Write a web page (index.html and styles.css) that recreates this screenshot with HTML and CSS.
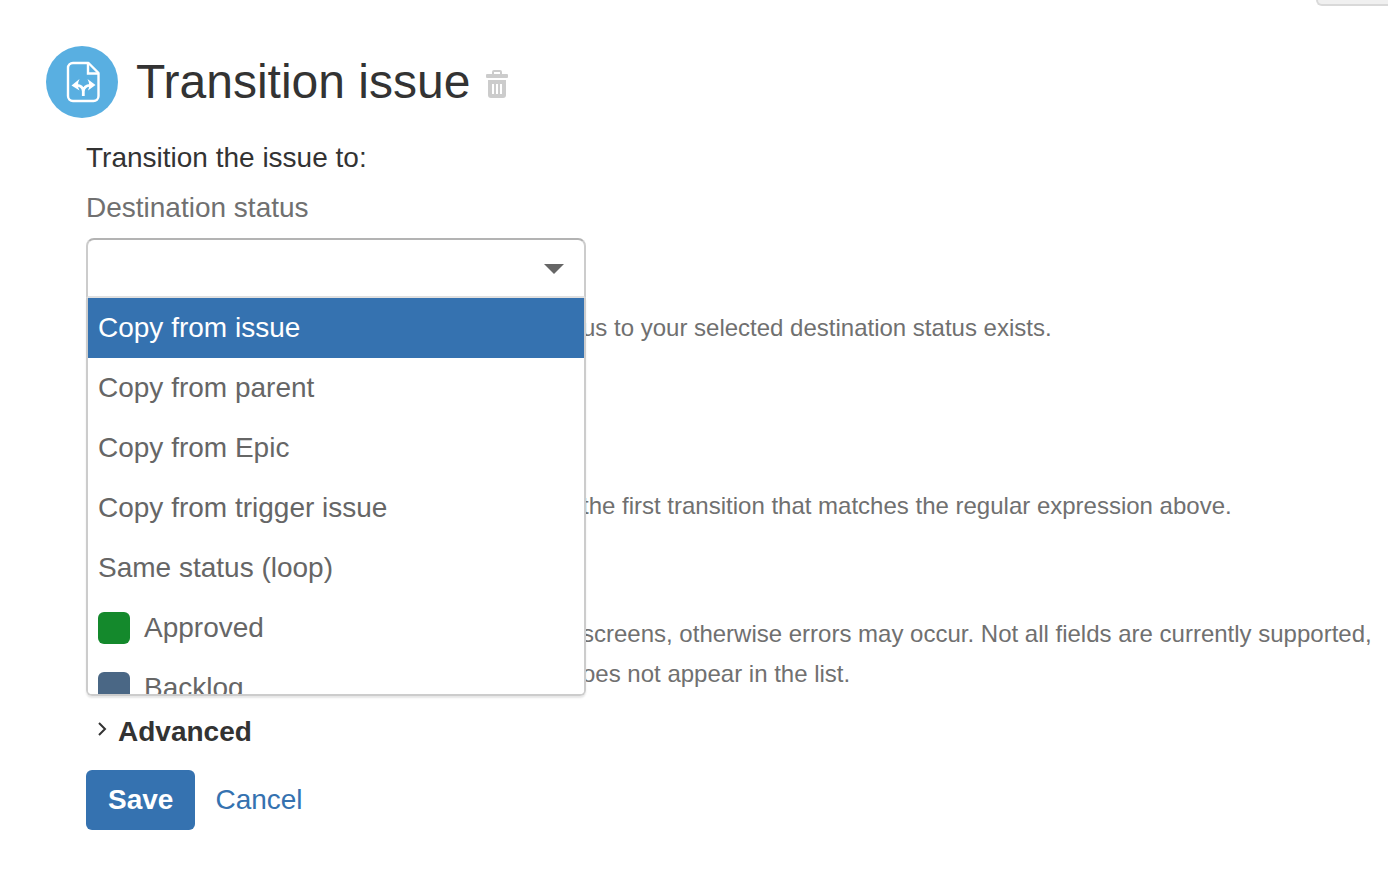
FILE: index.html
```html
<!DOCTYPE html>
<html lang="en">
<head>
    <meta charset="UTF-8">
    <title>Transition issue</title>
    <link rel="stylesheet" href="styles.css">
</head>
<body>
<button class="corner" type="button" aria-label="More"></button>
<form class="action">
    <header class="header">
        <svg class="icon" viewBox="0 0 72 72" aria-hidden="true">
            <circle cx="36" cy="36" r="36" fill="#59afe1"/>
            <path d="M42.500 17H27a5 5 0 0 0-5 5v28a5 5 0 0 0 5 5h20.500a5 5 0 0 0 5-5V27z" fill="none" stroke="#fff" stroke-width="2.400" stroke-linejoin="round"/>
            <path d="M42 17v10.500h10.500" fill="none" stroke="#fff" stroke-width="2.400"/>
            <path d="M37.300 50v-4.500M30 39.500c4.500-.5 7.300 2 7.300 6M45 39.500c-4.500-.5-7.700 2-7.700 6" fill="none" stroke="#fff" stroke-width="2.800"/>
            <path d="M25.500 39.500L33.500 33Q30.500 39 33.500 44.500zM49.500 39L41.500 33Q44.500 38.500 42 44.500z" fill="#fff"/>
        </svg>
        <h1>Transition issue</h1>
        <button class="delete" type="button" aria-label="Delete">
            <svg viewBox="0 0 22 28" aria-hidden="true">
                <path d="M7 4V2q0-1 1-1h6q1 0 1 1v2" fill="none" stroke="#ccc" stroke-width="2"/>
                <rect y="4" width="22" height="4" rx="1" fill="#ccc"/>
                <path d="M2 10h18v15q0 3-3 3H5q-3 0-3-3z" fill="#ccc"/>
                <path d="M7 14v10M11 14v10M15 14v10" stroke="#fff" stroke-width="2"/>
            </svg>
        </button>
    </header>
    <div class="content">
        <p class="intro">Transition the issue to:</p>
        <label for="status">Destination status</label>
        <div class="dropdown">
            <select id="status">
                <option value=""></option>
            </select>
            <svg class="arrow" viewBox="0 0 20 10" aria-hidden="true"><path d="M0 0h20L10 10z" fill="#666"/></svg>
            <ul class="menu">
                <li><button class="current" type="button">Copy from issue</button></li>
                <li><button type="button">Copy from parent</button></li>
                <li><button type="button">Copy from Epic</button></li>
                <li><button type="button">Copy from trigger issue</button></li>
                <li><button type="button">Same status (loop)</button></li>
                <li><button type="button"><span class="color green"></span>Approved</button></li>
                <li><button type="button"><span class="color blue"></span>Backlog</button></li>
            </ul>
        </div>
        <p class="note status-note">us to your selected destination status exists.</p>
        <p class="note regex-note">the first transition that matches the regular expression above.</p>
        <p class="note">screens, otherwise errors may occur. Not all fields are currently supported,<br>oes not appear in the list.</p>
        <button class="advanced" type="button">
            <svg viewBox="0 0 10 16" aria-hidden="true"><path d="M2 2l6 6-6 6" fill="none" stroke="#333" stroke-width="2"/></svg>
            Advanced
        </button>
        <div class="buttons">
            <button class="save" type="submit">Save</button>
            <a href="#">Cancel</a>
        </div>
    </div>
</form>
</body>
</html>
```
FILE: styles.css
```css
* {
    margin: 0;
    padding: 0;
    box-sizing: border-box;
}

body {
    background: #fff;
    color: #333;
    font: 28px/40px "Liberation Sans", Arial, sans-serif;
    overflow-x: hidden;
}

button {
    font: inherit;
    color: inherit;
    background: none;
    border: 0;
    cursor: pointer;
}

/* bottom edge of the button above the form */
.corner {
    position: absolute;
    top: 0;
    right: 0;
    width: 72px;
    height: 6px;
    background: #f0f0f0;
    border: 2px solid #d9d9d9;
    border-width: 0 0 2px 2px;
    border-radius: 0 0 0 6px;
}

.action {
    padding: 46px 0 50px 46px;
}

.header {
    display: flex;
    align-items: center;
}

.icon {
    width: 72px;
    height: 72px;
    margin-right: 18px;
}

h1 {
    font-size: 48px;
    line-height: 72px;
    font-weight: normal;
}

.delete {
    width: 22px;
    height: 28px;
    margin-left: 16px;
    margin-top: 4px;
}

.delete svg {
    display: block;
}

.content {
    padding: 20px 0 0 40px;
}

.intro {
    margin-bottom: 10px;
}

label {
    display: block;
    margin-bottom: 10px;
    color: #707070;
}

.dropdown {
    position: relative;
    width: 500px;
    max-width: 100%;
    margin-bottom: 10px;
}

select {
    appearance: none;
    display: block;
    width: 100%;
    height: 60px;
    padding: 0 48px 0 10px;
    font: inherit;
    color: #666;
    background: #fff;
    border: 2px solid #ccc;
    border-top-color: #b3b3b3;
    border-bottom-color: #e0e0e0;
    border-radius: 8px 8px 0 0;
}

.arrow {
    position: absolute;
    top: 26px;
    right: 22px;
    width: 20px;
    height: 10px;
    pointer-events: none;
}

.menu {
    position: absolute;
    top: 100%;
    left: 0;
    width: 100%;
    max-height: 398px;
    overflow-y: auto;
    scrollbar-width: none;
    list-style: none;
    background: #fff;
    border: 2px solid #ccc;
    border-top: 0;
    border-radius: 0 0 6px 6px;
    box-shadow: 0 2px 2px rgba(0,0,0,0.1);
}

.menu button {
    display: flex;
    align-items: center;
    width: 100%;
    height: 60px;
    padding: 0 10px;
    color: #666;
    text-align: left;
}

.menu button.current {
    background: #3572b0;
    color: #fff;
}

.color {
    width: 32px;
    height: 32px;
    margin-right: 14px;
    border-radius: 6px;
}

.green {
    background: #14892c;
}

.blue {
    background: #4a6785;
}

.note {
    padding-left: 496px;
    font-size: 24px;
    color: #707070;
}

.status-note {
    margin-bottom: 138px;
}

.regex-note {
    margin-bottom: 88px;
}

.advanced {
    display: flex;
    align-items: center;
    margin-top: 18px;
    padding-left: 11px;
    font-weight: bold;
}

.advanced svg {
    width: 10px;
    height: 16px;
    margin-right: 11px;
    margin-bottom: 6px;
}

.buttons {
    display: flex;
    align-items: center;
    gap: 20px;
    margin-top: 18px;
}

.save {
    height: 60px;
    padding: 0 22px;
    background: #3572b0;
    color: #fff;
    font-weight: bold;
    border-radius: 6px;
}

.buttons a {
    color: #3572b0;
    text-decoration: none;
}
```
